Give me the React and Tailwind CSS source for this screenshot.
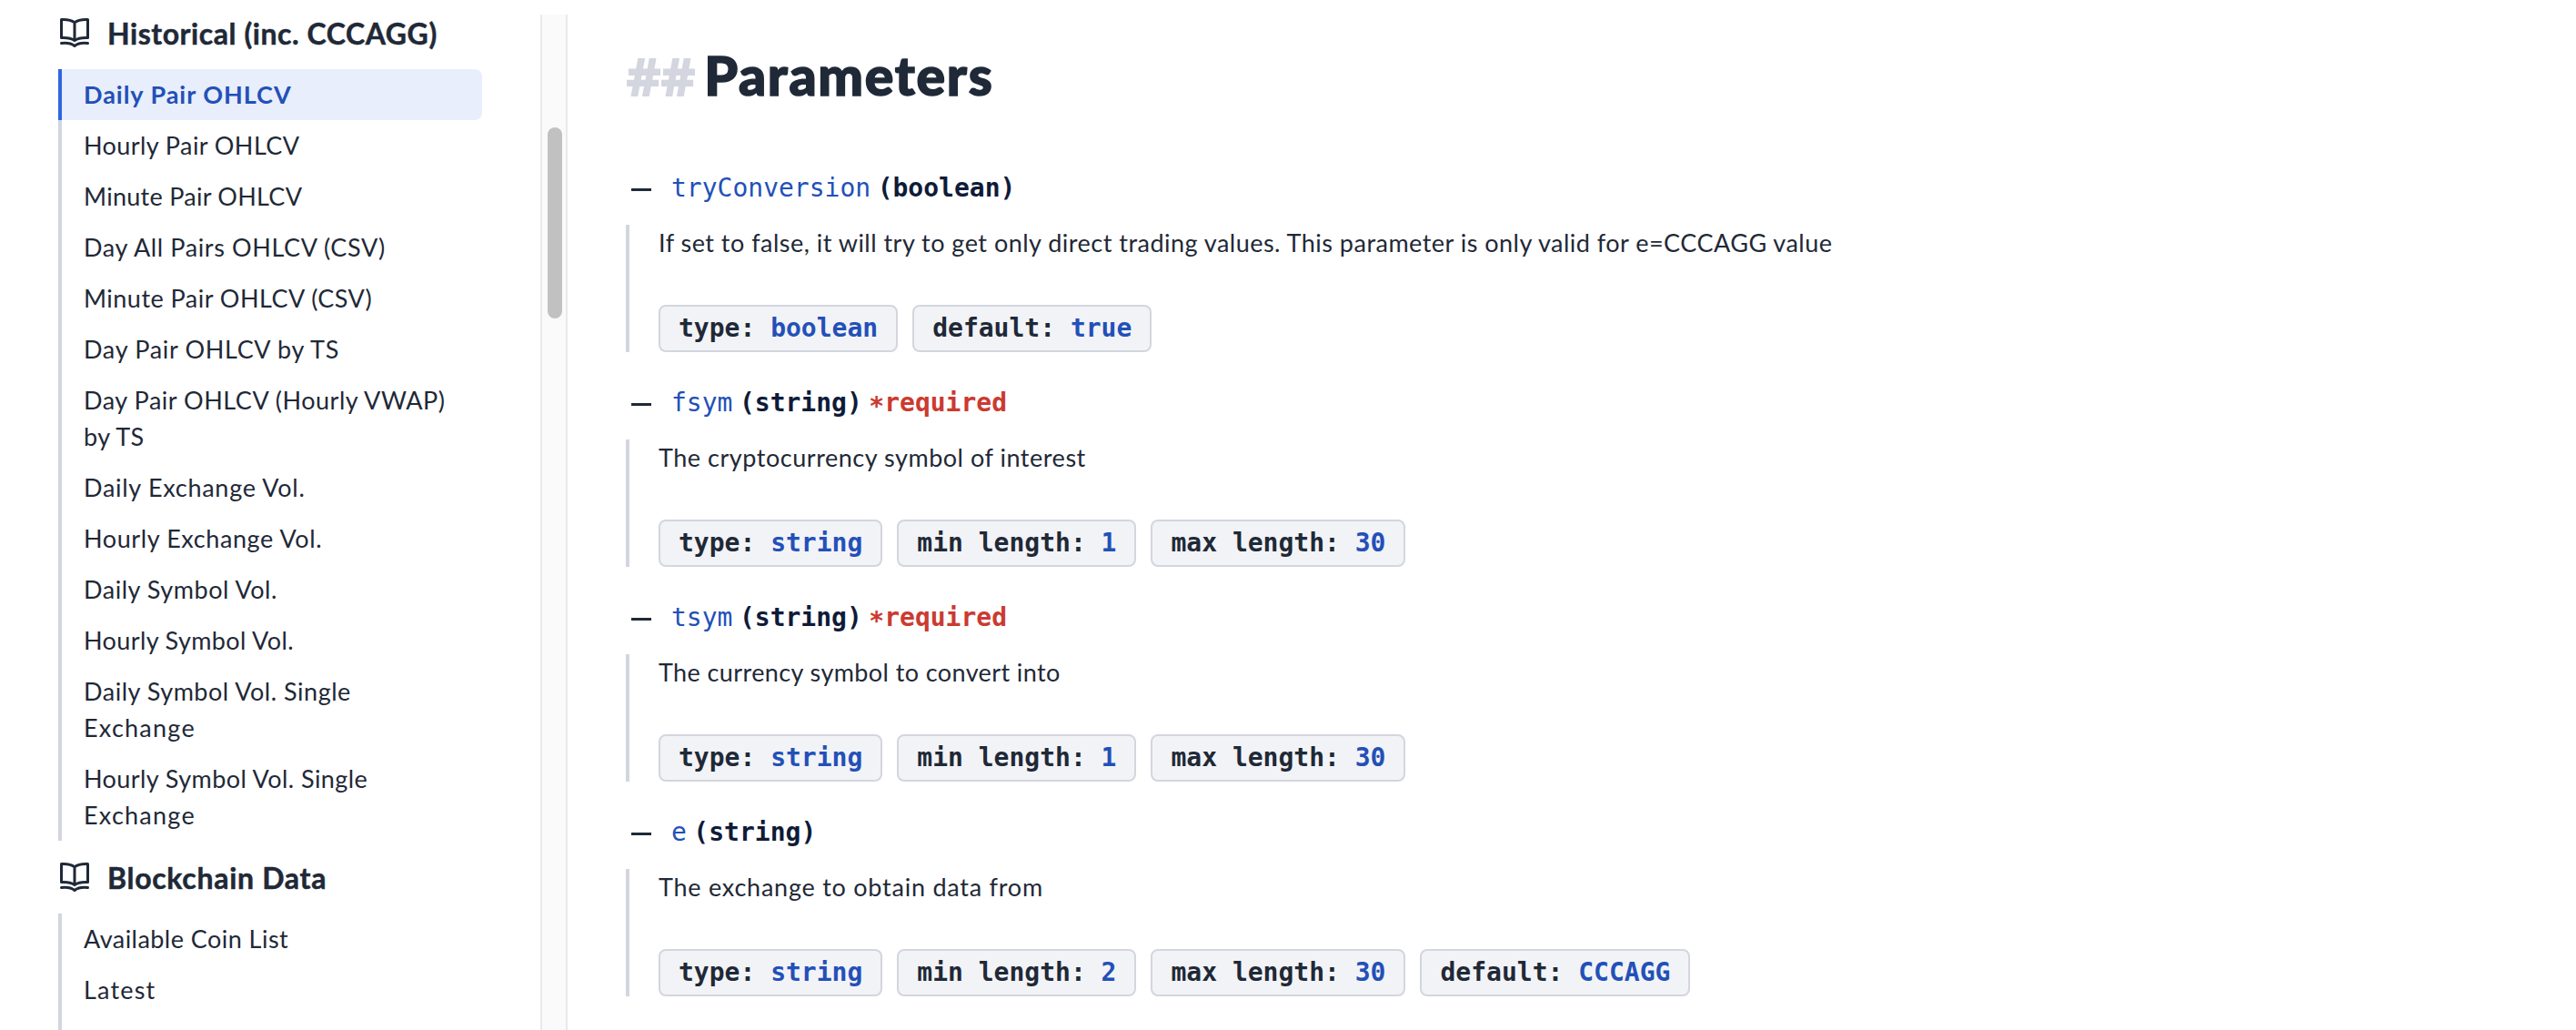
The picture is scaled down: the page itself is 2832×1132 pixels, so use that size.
const HISTORICAL = [
  { active: true, lines: [["Daily Pair OHLCV", "tracking-[0.97px]"]] },
  { lines: [["Hourly Pair OHLCV", "tracking-[0.42px]"]] },
  { lines: [["Minute Pair OHLCV", "tracking-[0.27px]"]] },
  { lines: [["Day All Pairs OHLCV (CSV)", "tracking-[0.61px]"]] },
  { lines: [["Minute Pair OHLCV (CSV)", "tracking-[0.48px]"]] },
  { lines: [["Day Pair OHLCV by TS", "tracking-[0.68px]"]] },
  {
    lines: [
      ["Day Pair OHLCV (Hourly VWAP)", "tracking-[0.53px]"],
      ["by TS", "tracking-[0.4px]"],
    ],
  },
  { lines: [["Daily Exchange Vol.", "tracking-[0.72px]"]] },
  { lines: [["Hourly Exchange Vol.", "tracking-[0.6px]"]] },
  { lines: [["Daily Symbol Vol.", "tracking-[0.54px]"]] },
  { lines: [["Hourly Symbol Vol.", "tracking-[0.38px]"]] },
  {
    lines: [
      ["Daily Symbol Vol. Single", "tracking-[0.52px]"],
      ["Exchange", "tracking-[1.24px]"],
    ],
  },
  {
    lines: [
      ["Hourly Symbol Vol. Single", "tracking-[0.42px]"],
      ["Exchange", "tracking-[1.24px]"],
    ],
  },
];

const BLOCKCHAIN = [
  { lines: [["Available Coin List", "tracking-[0.46px]"]] },
  { lines: [["Latest", "tracking-[1.17px]"]] },
  { lines: [] },
];

const PARAMS = [
  {
    name: "tryConversion",
    type: "boolean",
    text: "If set to false, it will try to get only direct trading values. This parameter is only valid for e=CCCAGG value",
    tracking: "tracking-[0.485px]",
    chips: [["type", "boolean"], ["default", "true"]],
  },
  {
    name: "fsym",
    type: "string",
    required: true,
    text: "The cryptocurrency symbol of interest",
    tracking: "tracking-[0.53px]",
    chips: [["type", "string"], ["min length", "1"], ["max length", "30"]],
  },
  {
    name: "tsym",
    type: "string",
    required: true,
    text: "The currency symbol to convert into",
    tracking: "tracking-[0.4px]",
    chips: [["type", "string"], ["min length", "1"], ["max length", "30"]],
  },
  {
    name: "e",
    type: "string",
    text: "The exchange to obtain data from",
    tracking: "tracking-[0.76px]",
    chips: [["type", "string"], ["min length", "2"], ["max length", "30"], ["default", "CCCAGG"]],
  },
];

function BookIcon() {
  return (
    <svg viewBox="0 0 36 36" className="h-9 w-9 shrink-0" fill="none" stroke="currentColor" strokeWidth="3" strokeLinejoin="round" strokeLinecap="round">
      <path d="M18 6.800C14.500 3.900 9.500 3.200 3.500 3.500V23.600C9.500 23.300 14.500 24 18 26.600C21.500 24 26.500 23.300 32.500 23.600V3.500C26.500 3.200 21.500 3.900 18 6.800ZM18 6.800V26.600" />
      <path d="M3.500 29.600C9.500 28.800 14.500 29.800 18 32.500C21.500 29.800 26.500 28.800 32.500 29.600" />
    </svg>
  );
}

function Section({ title, tracking, items }) {
  return (
    <section>
      <h2 className="flex h-20 items-center gap-[18px] text-[32px] font-bold">
        <BookIcon />
        <span className={"pt-0.5 [-webkit-text-stroke:0.5px] " + tracking}>{title}</span>
      </h2>
      <ul>
        {items.map((item, i) => (
          <li
            key={i}
            className={
              item.active
                ? "min-h-14 rounded-r-lg border-l-4 border-[#2f66e0] bg-[#e8eefb] py-2 pl-6 font-bold text-[#2350b8]"
                : "min-h-14 border-l-4 border-[#d3d6df] py-2 pl-6"
            }
          >
            {item.lines.map(([text, spacing]) => (
              <span key={text} className={"block whitespace-nowrap text-[27px] leading-10 " + spacing}>
                {text}
              </span>
            ))}
          </li>
        ))}
      </ul>
    </section>
  );
}

function Chip({ label, value }) {
  return (
    <span className="flex h-[52px] items-center whitespace-pre rounded-lg border-2 border-[#d3d6df] bg-[#f2f3f6] px-5 font-['DejaVu_Sans_Mono',monospace] text-[28px] font-bold">
      {label}: <span className="text-[#2350b8]">{value}</span>
    </span>
  );
}

function Param({ param }) {
  return (
    <div>
      <div className="flex h-24 items-center pl-1.5 pt-4">
        <span className="mt-0.5 h-[3px] w-[22px] bg-[#1f2937]" />
        <div className="ml-[22px] flex gap-[7.500px] font-['DejaVu_Sans_Mono',monospace] text-[28px] leading-10">
          <span className="text-[#2350b8]">{param.name}</span>
          <span className="font-bold text-[#0f1b38]">({param.type})</span>
          {param.required && (
            <span className="font-bold text-[#cb3a31]">
              <span className="relative top-1">*</span>required
            </span>
          )}
        </div>
      </div>
      <div className="flex h-[140px] flex-col justify-between border-l-4 border-[#d3d6df] pl-8">
        <p className={"whitespace-nowrap text-[27px] leading-10 " + param.tracking}>{param.text}</p>
        <div className="flex gap-4">
          {param.chips.map(([label, value]) => (
            <Chip key={label} label={label} value={value} />
          ))}
        </div>
      </div>
    </div>
  );
}

export default function App() {
  return (
    <div className="flex h-[1132px] w-[2832px] overflow-hidden bg-white font-['Lato',sans-serif] text-[#1f2937]">
      <nav className="-mt-1 w-[594px] shrink-0 px-16">
        <Section title="Historical (inc. CCCAGG)" tracking="tracking-[0.56px]" items={HISTORICAL} />
        <Section title="Blockchain Data" tracking="tracking-[0.7px]" items={BLOCKCHAIN} />
      </nav>
      <div className="mt-4 w-[30px] shrink-0 border-x-2 border-[#e9e9e9] bg-[#fafafa] pl-1.5">
        <div className="mt-[124px] h-[210px] w-4 rounded-full bg-[#c1c1c1]" />
      </div>
      <main className="ml-16 flex-1">
        <h1 className="flex h-[151px] gap-2.5 pt-[47px] text-[59px] leading-[72px] font-black">
          <span className="font-['Open_Sans',sans-serif] tracking-[-1px] text-[#d3d6df]">##</span>
          <span className="tracking-[1.7px] [-webkit-text-stroke:1.5px]">Parameters</span>
        </h1>
        {PARAMS.map((param) => (
          <Param key={param.name} param={param} />
        ))}
      </main>
    </div>
  );
}
